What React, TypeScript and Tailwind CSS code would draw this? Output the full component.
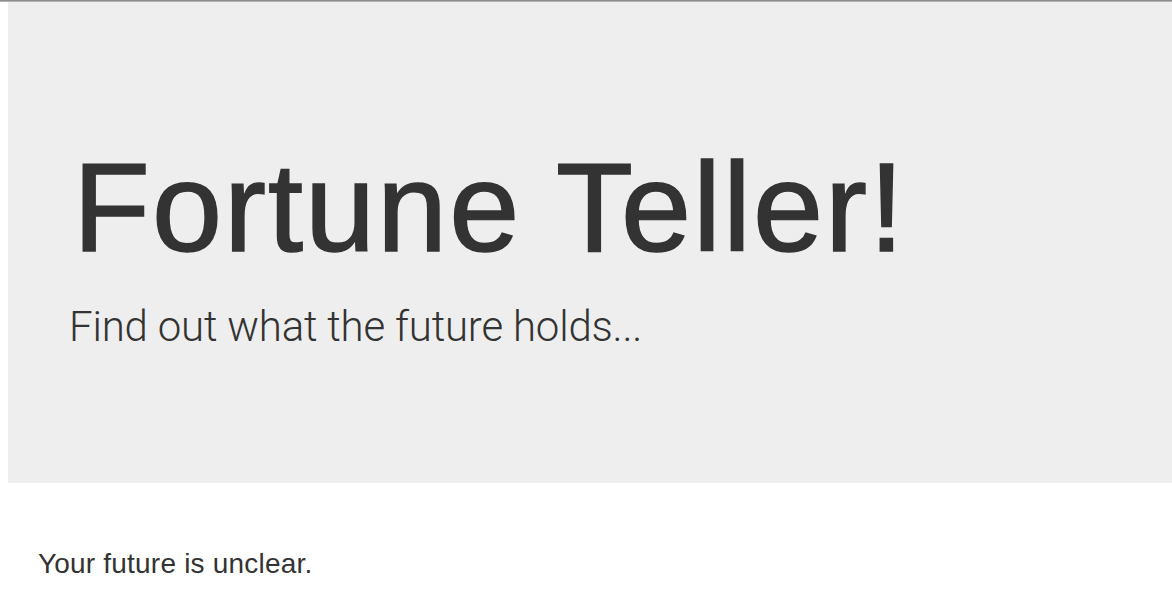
export default function App() {
  return (
    <div
      className="min-h-[608px] bg-white text-[#333]"
      style={{ fontFamily: '"Liberation Sans", Arial, sans-serif' }}
    >
      {/* Top window edge */}
      <div className="h-px bg-[#8a8a8a]" />
      <div className="h-px bg-[#b4b4b4]" />

      {/* Jumbotron */}
      <div className="ml-[8px] bg-[#eeeeee] pl-[61px] pt-[137px] pb-[127px]">
        <h1 className="ml-[4px] text-[126px] leading-[1.1] font-normal tracking-[2px] [-webkit-text-stroke:1.6px_#333]">
          Fortune Teller!
        </h1>
        <p className="mt-[20px] font-['Roboto',sans-serif] text-[42px] leading-[1.4] font-light tracking-[-0.2px]">
          Find out what the future holds...
        </p>
      </div>

      {/* Result */}
      <p className="mt-[61px] pl-[38px] text-[28px] leading-[40px] tracking-[0.2px]">
        Your future is unclear.
      </p>
    </div>
  );
}
